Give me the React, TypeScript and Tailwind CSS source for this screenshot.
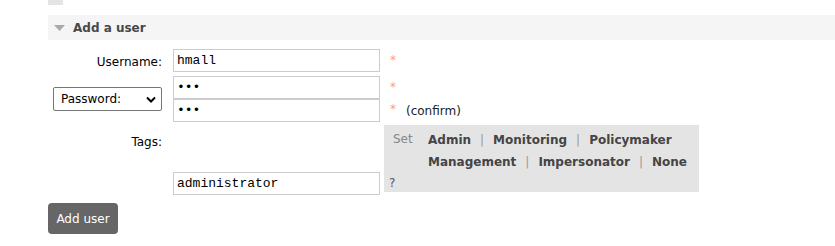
import React from "react";

const font = { fontFamily: '"DejaVu Sans", Verdana, sans-serif' };

function TextInput({ value, type = "text" }: { value: string; type?: string }) {
  return (
    <input
      type={type}
      value={value}
      readOnly
      className="block w-[207px] h-[23px] border border-[#cccccc] bg-white px-[3px] text-[13px] text-black outline-none"
      style={{ fontFamily: '"Liberation Mono", "Courier New", monospace' }}
    />
  );
}

const Star = () => <span className="text-[#ff9a90] text-[12px] leading-none">*</span>;

const Sep = () => <span className="text-[#999999] font-normal">|</span>;

export default function App() {
  return (
    <div className="w-[835px] h-[246px] bg-white pl-[48px] text-[12px] text-black" style={font}>
      <div className="w-[15px] h-[5px] bg-[#e4e4e4]" />
      <div className="mt-[10px] h-[25px] bg-[#f5f5f5] flex items-center pl-[6px]">
        <svg width="11" height="6" viewBox="0 0 11 6" className="mr-[8px]">
          <polygon points="0,0 11,0 5.5,6" fill="#aaaaaa" />
        </svg>
        <span className="font-bold text-[12px] text-[#484848]">Add a user</span>
      </div>

      <div className="mt-[9px] grid grid-cols-[125px_207px_1fr]">
        {/* Username */}
        <div className="flex items-center justify-end pr-[11px] pt-[3px]">Username:</div>
        <TextInput value="hmall" />
        <div className="pl-[10px] pt-[2px]">
          <Star />
        </div>

        {/* Password */}
        <div className="flex items-center justify-start pl-[5px] pt-[4px]">
          <div className="w-[109px] h-[24px] border border-[#767676] rounded-[2px] bg-white flex items-center justify-between pl-[7px] pr-[5px] text-black">
            <span>Password:</span>
            <svg width="10" height="7" viewBox="0 0 10 7">
              <polyline points="1,1.5 5,5.5 9,1.5" fill="none" stroke="#000" strokeWidth="2" />
            </svg>
          </div>
        </div>
        <div className="mt-[4px]">
          <TextInput type="password" value="abc" />
          <TextInput type="password" value="abc" />
        </div>
        <div className="mt-[4px] pl-[10px]">
          <div className="h-[23px] pt-[2px]">
            <Star />
          </div>
          <div className="h-[23px] flex items-center gap-[10px]">
            <span className="-mt-[4px]">
              <Star />
            </span>
            <span className="text-[#222222]">(confirm)</span>
          </div>
        </div>

        {/* Tags */}
        <div className="flex justify-end pr-[11px] pt-[8px] mt-[3px]">Tags:</div>
        <div className="mt-[3px] flex flex-col justify-end">
          <div className="-mb-[3px]">
            <TextInput value="administrator" />
          </div>
        </div>
        <div className="mt-[3px] pl-[4px]">
          <div className="w-[315px] h-[67px] bg-[#e4e4e4] pl-[5px] pt-[3px]">
            <div className="flex">
              <span className="text-[#888888] w-[39px] pl-[4px] leading-[22px]">Set</span>
              <div className="font-bold text-[#444444] leading-[22px]">
                <div className="flex gap-[9px] pt-[1px]">
                  <span>Admin</span>
                  <Sep />
                  <span>Monitoring</span>
                  <Sep />
                  <span>Policymaker</span>
                </div>
                <div className="flex gap-[9px]">
                  <span>Management</span>
                  <Sep />
                  <span>Impersonator</span>
                  <Sep />
                  <span>None</span>
                </div>
              </div>
            </div>
            <div className="text-[#555555] leading-[20px]">?</div>
          </div>
        </div>
      </div>

      <button className="mt-[11px] w-[70px] h-[31px] rounded-[4px] bg-[#666666] text-white text-[12px]" style={font}>
        Add user
      </button>
    </div>
  );
}
